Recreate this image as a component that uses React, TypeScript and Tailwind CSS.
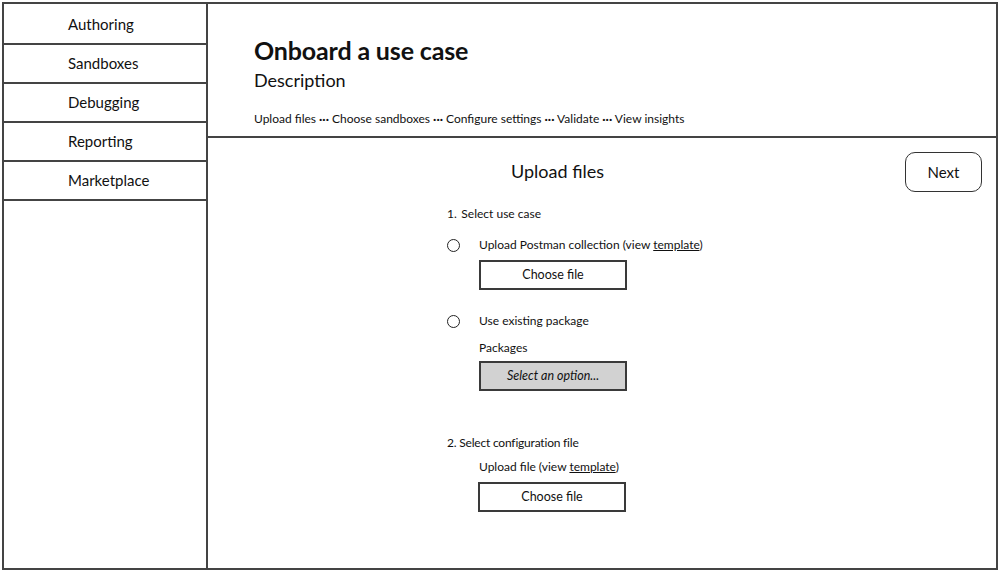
import React from "react";

const navItems = ["Authoring", "Sandboxes", "Debugging", "Reporting", "Marketplace"];

function Radio() {
  return <span className="inline-block w-[13px] h-[13px] rounded-full border-[1.5px] border-[#222] shrink-0" />;
}

function FileBox({ label, gray = false, italic = false, w = "w-[148px]" }: { label: string; gray?: boolean; italic?: boolean; w?: string }) {
  return (
    <div
      className={`${w} h-[30px] border-2 border-[#3a3a3a] flex items-center justify-center text-[12.5px] text-[#111] ${gray ? "bg-[#d2d2d2]" : "bg-white"} ${italic ? "italic" : ""}`}
    >
      {label}
    </div>
  );
}

export default function App() {
  return (
    <div className="w-[1000px] h-[571px] bg-white pl-[2px] pt-[2px]" style={{ fontFamily: "Lato, 'Noto Sans', sans-serif" }}>
      <div className="w-[996px] h-[568px] border-2 border-[#444] flex text-[#111]">
        {/* Sidebar */}
        <div className="w-[204px] shrink-0 border-r-2 border-[#444] flex flex-col pt-[2px]">
          {navItems.map((n) => (
            <div key={n} className="h-[39px] border-b-2 border-[#444] flex items-center pl-[64px] text-[15px]">
              {n}
            </div>
          ))}
        </div>
        {/* Right */}
        <div className="flex-1 flex flex-col">
          <div className="h-[134px] border-b-2 border-[#444] pl-[46px] pt-[31px] shrink-0">
            <div className="text-[25px] font-bold leading-[30px] tracking-[-0.15px]">Onboard a use case</div>
            <div className="text-[18px] leading-[24px] mt-[3px]">Description</div>
            <div className="text-[12px] leading-[16px] mt-[19px]">
              Upload files <span className="font-bold">···</span> Choose sandboxes <span className="font-bold">···</span> Configure settings{" "}
              <span className="font-bold">···</span> Validate <span className="font-bold">···</span> View insights
            </div>
          </div>
          <div className="flex-1 flex">
            <div className="flex-1 flex flex-col">
              <div className="pl-[303px] pt-[21px] text-[18px] leading-[24px]">Upload files</div>
              <div className="pl-[239px] flex flex-col text-[12px]">
                <div className="mt-[21px] leading-[20px]">1.&thinsp; Select use case</div>
                <div className="mt-[11px] h-[20px] flex items-center">
                  <Radio />
                  <span className="ml-[19px]">
                    Upload Postman collection (view <span className="underline">template</span>)
                  </span>
                </div>
                <div className="mt-[5px] pl-[32px]">
                  <FileBox label="Choose file" />
                </div>
                <div className="mt-[21px] h-[20px] flex items-center">
                  <Radio />
                  <span className="ml-[19px]">Use existing package</span>
                </div>
                <div className="mt-[7px] pl-[32px] leading-[20px]">Packages</div>
                <div className="mt-[3px] pl-[32px]">
                  <FileBox label="Select an option..." gray italic />
                </div>
                <div className="mt-[42px] leading-[20px] tracking-[-0.2px]">2. Select configuration file</div>
                <div className="mt-[4px] pl-[32px] leading-[20px]">
                  Upload file (view <span className="underline">template</span>)
                </div>
                <div className="mt-[5px] pl-[31px]">
                  <FileBox label="Choose file" />
                </div>
              </div>
            </div>
            <div className="pt-[14px] pr-[14px]">
              <div className="w-[77px] h-[40px] border-[1.5px] border-[#333] rounded-[10px] flex items-center justify-center text-[15px]">
                Next
              </div>
            </div>
          </div>
        </div>
      </div>
    </div>
  );
}
